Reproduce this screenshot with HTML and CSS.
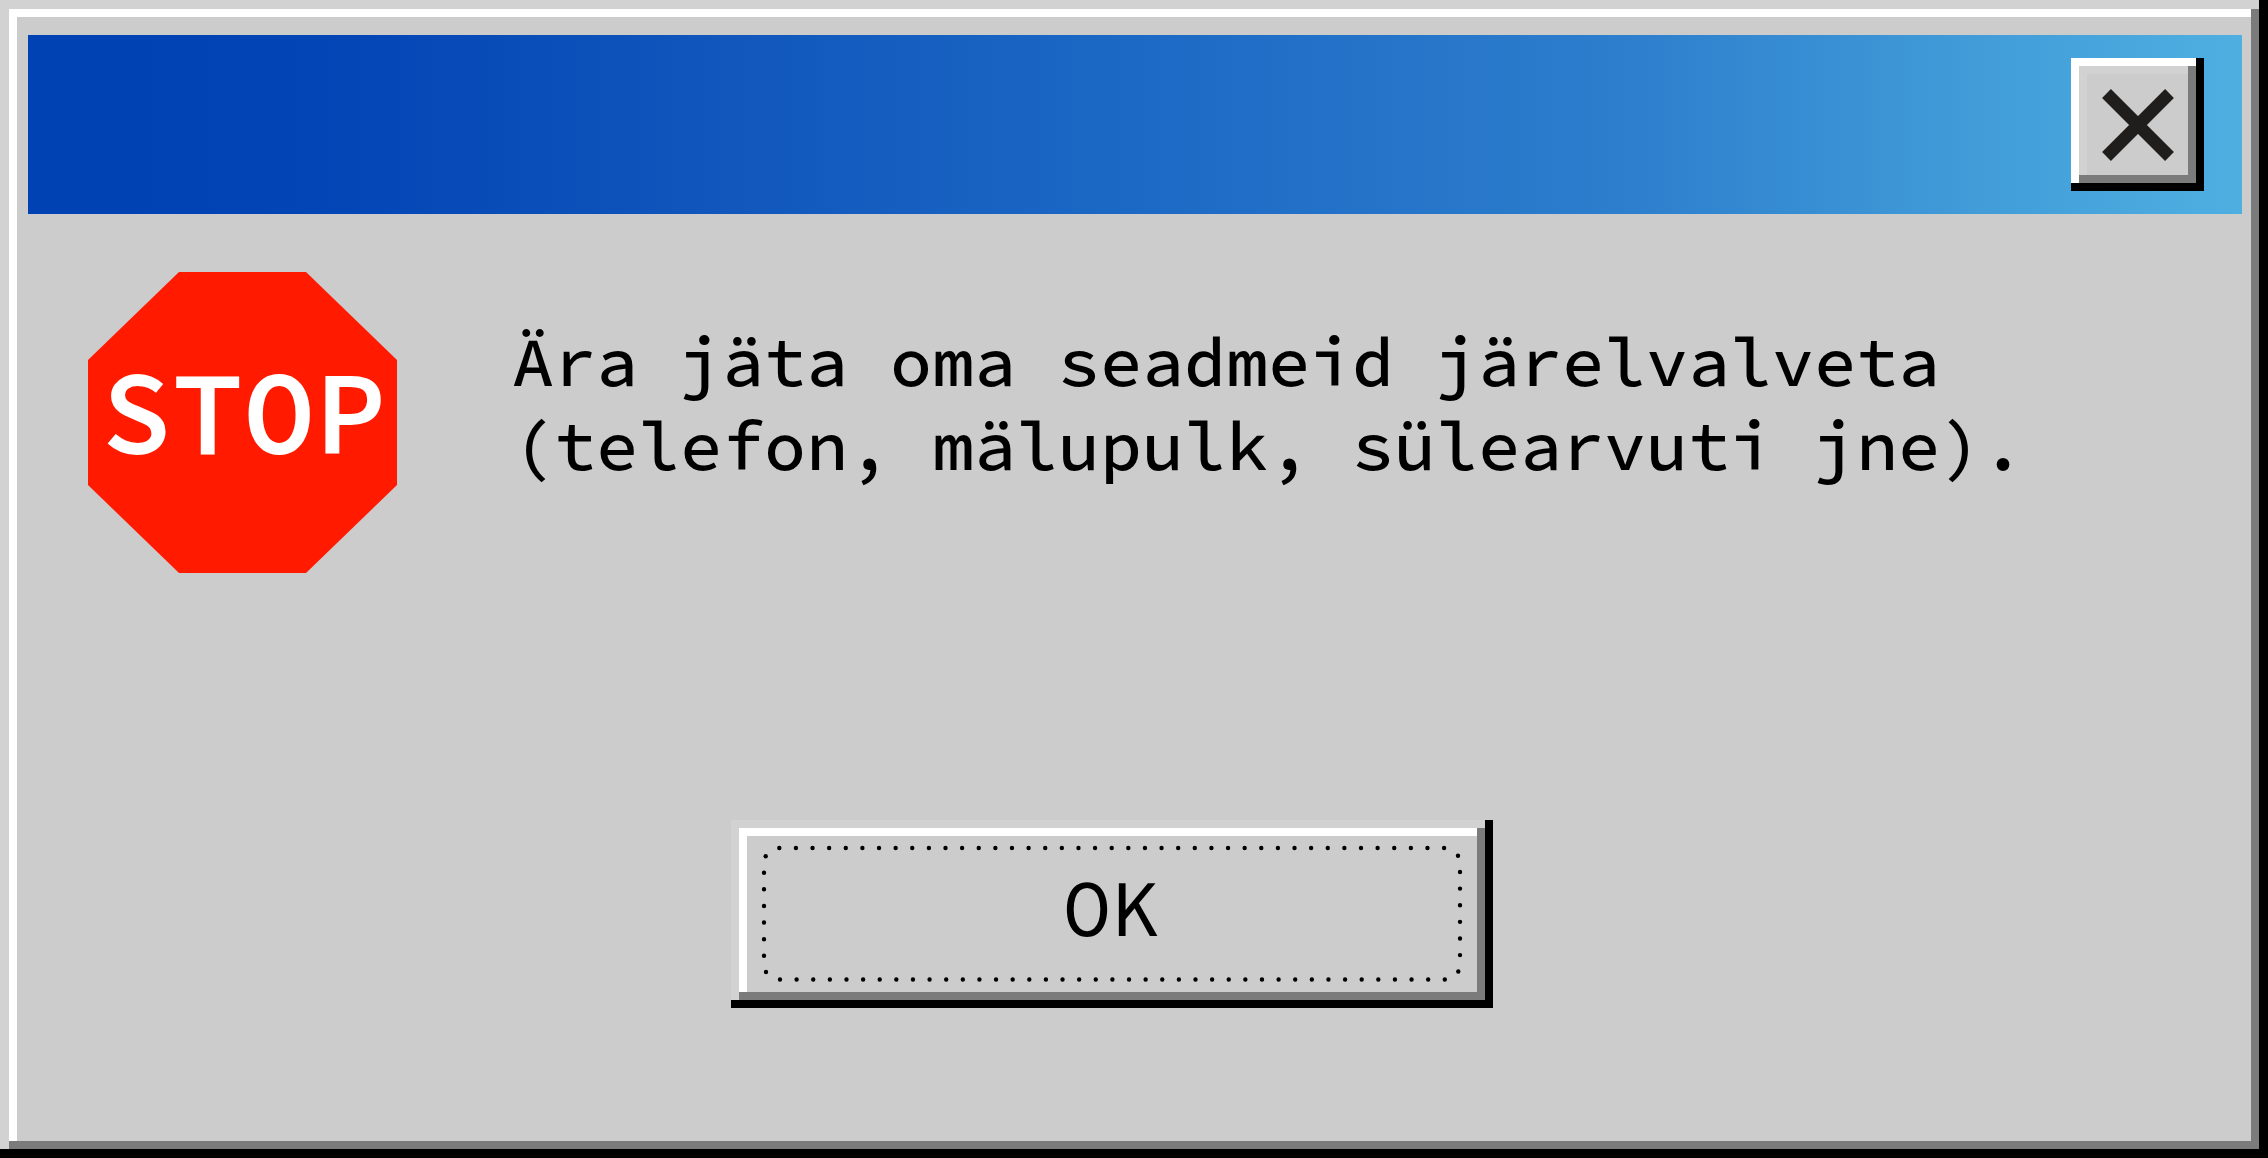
FILE: index.html
```
<!DOCTYPE html>
<html lang="et">
<head>
<meta charset="utf-8">
<meta name="viewport" content="width=device-width, initial-scale=1">
<title>Hoiatus</title>
<link rel="stylesheet" href="styles.css">
</head>
<body>
<main class="dialog" role="alertdialog" aria-describedby="message">
  <header class="titlebar">
    <button class="close" type="button" aria-label="Sulge">
      <svg class="close-icon" viewBox="0 0 72 72" aria-hidden="true">
        <path d="M4.500 4.500 67.500 67.500M67.500 4.500 4.500 67.500" fill="none" stroke="#1f1e1c" stroke-width="12.500"/>
      </svg>
    </button>
  </header>
  <div class="content">
    <div class="sign"><span>STOP</span></div>
    <p class="message" id="message">Ära jäta oma seadmeid järelvalveta<br>(telefon, mälupulk, sülearvuti jne).</p>
  </div>
  <footer class="actions">
    <button class="ok" type="button">
      <svg class="focus-ring" viewBox="0 0 762 188" aria-hidden="true">
        <g fill="none" stroke="#000" stroke-width="4.400" stroke-linecap="round" stroke-dasharray="0 16.620">
          <path d="M48.300 28H714"/>
          <path d="M49 159.500H715"/>
          <path d="M33 52.700V137"/>
          <path d="M729 52V136.500"/>
        </g>
        <g>
          <circle cx="34.700" cy="36.200" r="2.200"/>
          <circle cx="727" cy="35.800" r="2.200"/>
          <circle cx="35" cy="152" r="2.200"/>
          <circle cx="727.300" cy="151.500" r="2.200"/>
        </g>
      </svg>
      <span>OK</span>
    </button>
  </footer>
</main>
</body>
</html>
```
FILE: styles.css
```
:root {
  --face: #ccc;
  --light: #d2d2d2;
  --shade: #7b7b7b;
}

* {
  box-sizing: border-box;
}

body {
  margin: 0;
  font-family: "Source Code Pro", "DejaVu Sans Mono", monospace;
  color: #000;
  background: var(--face);
}

button {
  padding: 0;
  border: 0;
  border-radius: 0;
  font: inherit;
  color: inherit;
  background: var(--face);
}

.dialog {
  display: flex;
  flex-direction: column;
  min-height: 100vh;
  padding: 35px 26px 26px 28px;
  background: var(--face);
  box-shadow:
    inset -9px -9px #000,
    inset 9px 9px var(--light),
    inset -17px -17px var(--shade),
    inset 17px 17px #fff;
}

.titlebar {
  display: flex;
  justify-content: flex-end;
  padding: 23px 38px;
  background: linear-gradient(90deg, #0041b3 4%, #0446b6 15%, #1157bc 32%, #1c69c5 50%, #2d7ecd 72%, #419cd8 88%, #4fafe1 100%);
}

.close {
  display: grid;
  place-items: center;
  width: 133px;
  height: 133px;
  box-shadow:
    inset -8px -8px #000,
    inset 8px 8px #fff,
    inset -16px -16px var(--shade),
    inset 16px 16px var(--light);
}

.close-icon {
  width: 72px;
  height: 72px;
}

.content {
  display: flex;
  gap: 115px;
  padding: 58px 60px;
}

.sign {
  display: grid;
  flex: none;
  place-items: center;
  width: 309px;
  height: 301px;
  padding: 0 0 22px 2px;
  font-size: 119px;
  line-height: 120px;
  font-weight: 600;
  color: #fff;
  background: #ff1a00;
  clip-path: polygon(91px 0, 218px 0, 100% 88px, 100% 213px, 218px 100%, 91px 100%, 0 213px, 0 88px);
}

.message {
  margin: 47px 0;
  font-size: 70px;
  line-height: 84px;
  font-weight: 500;
}

.actions {
  display: flex;
  justify-content: center;
  margin-top: auto;
  padding: 0 46px 124px 0;
}

.ok {
  position: relative;
  display: grid;
  place-items: center;
  width: 762px;
  height: 188px;
  padding: 0 2px 12px 0;
  font-size: 80px;
  line-height: 96px;
  box-shadow:
    inset -8px -8px #000,
    inset 8px 8px var(--light),
    inset -16px -16px var(--shade),
    inset 16px 16px #fff;
}

.focus-ring {
  position: absolute;
  inset: 0;
}
```
